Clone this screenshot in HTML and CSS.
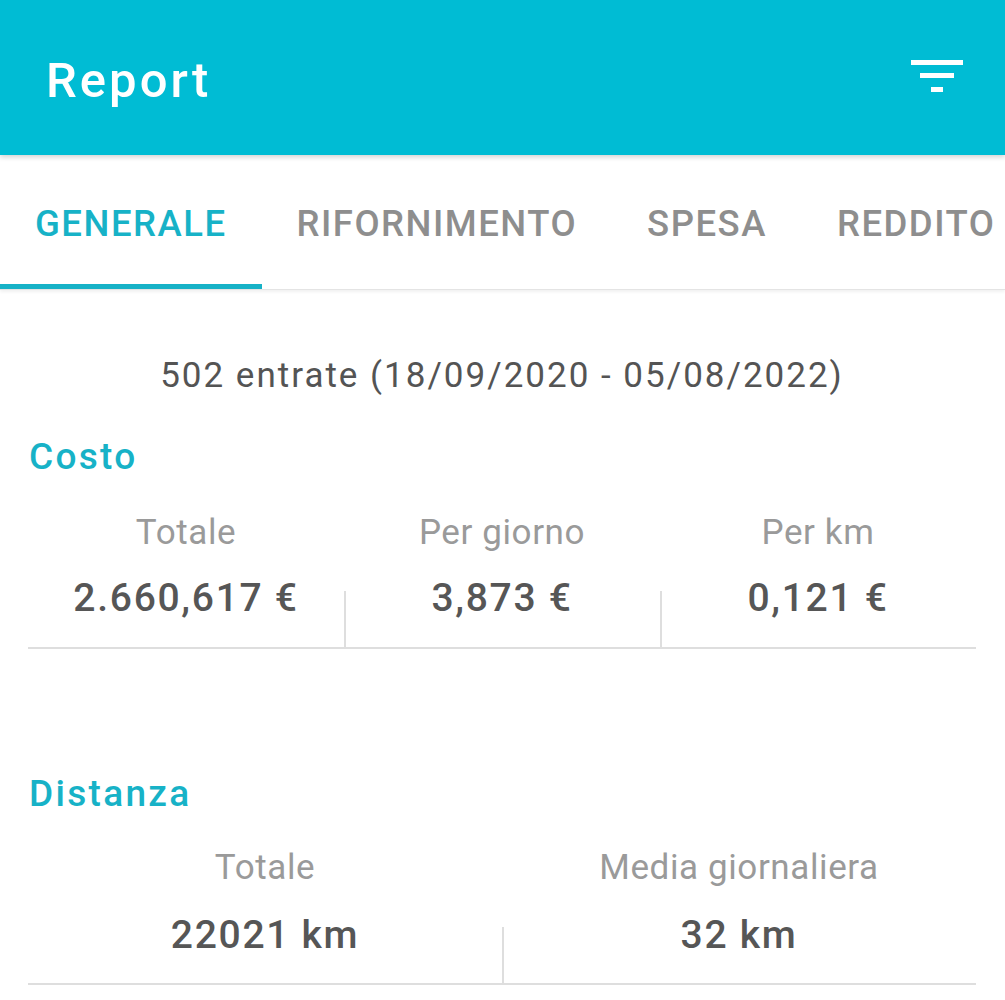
FILE: index.html
```html
<!DOCTYPE html>
<html lang="it">
<head>
	<meta charset="UTF-8">
	<title>Report</title>
	<link rel="stylesheet" href="styles.css">
</head>
<body>

	<!-- barra superiore -->
	<header class="appbar">
		<h1 class="appbar-title">Report</h1>
		<button class="filter-btn" type="button" aria-label="Filtra">
			<svg width="52" height="34" viewBox="0 0 52 34">
				<rect x="0" y="0" width="52" height="5" fill="#fff"/>
				<rect x="9" y="13" width="34" height="5" fill="#fff"/>
				<rect x="20" y="27" width="12" height="5" fill="#fff"/>
			</svg>
		</button>
	</header>

	<!-- schede -->
	<nav class="tabs">
		<a class="tab active">GENERALE</a>
		<a class="tab">RIFORNIMENTO</a>
		<a class="tab">SPESA</a>
		<a class="tab">REDDITO</a>
	</nav>

	<main class="content">
		<p class="summary">502 entrate (18/09/2020 - 05/08/2022)</p>

		<section class="block">
			<h2 class="block-title">Costo</h2>
			<div class="stats cols-3">
				<div class="stat">
					<div class="stat-label">Totale</div>
					<div class="stat-value">2.660,617 €</div>
				</div>
				<div class="stat">
					<div class="stat-label">Per giorno</div>
					<div class="stat-value">3,873 €</div>
				</div>
				<div class="stat">
					<div class="stat-label">Per km</div>
					<div class="stat-value">0,121 €</div>
				</div>
			</div>
		</section>

		<section class="block distance">
			<h2 class="block-title">Distanza</h2>
			<div class="stats cols-2">
				<div class="stat">
					<div class="stat-label">Totale</div>
					<div class="stat-value">22021 km</div>
				</div>
				<div class="stat">
					<div class="stat-label">Media giornaliera</div>
					<div class="stat-value">32 km</div>
				</div>
			</div>
		</section>
	</main>

</body>
</html>
```

FILE: styles.css
```css
*{box-sizing: border-box;}
body{
	margin: 0;
	background-color: #fff;
	font-family: Roboto, "Liberation Sans", sans-serif;
	overflow: hidden;
}

.appbar{
	position: relative;
	z-index: 2;
	height: 155px;
	display: flex;
	align-items: center;
	justify-content: space-between;
	padding: 0 42px 0 46px;
	background-color: #00BCD4;
	box-shadow: 0 2px 5px rgba(0,0,0,0.18);
}
.appbar-title{
	margin: 0;
	color: #fff;
	font-size: 49px;
	font-weight: 500;
	letter-spacing: 3px;
	line-height: 1;
	padding-top: 5px;
}
.filter-btn{
	border: none;
	background: none;
	padding: 0;
	display: flex;
	margin-top: -1px;
}

.tabs{
	display: flex;
	height: 135px;
	white-space: nowrap;
	border-bottom: 1px solid #e4e4e4;
	box-shadow: 0 2px 3px rgba(0,0,0,0.06);
}
.tab{
	display: flex;
	align-items: center;
	padding: 8px 35px 0 35px;
	border-bottom: 5px solid transparent;
	color: #8e8e8e;
	font-size: 36.5px;
	font-weight: 500;
	letter-spacing: 1.5px;
	flex-shrink: 0;
}
.tab.active{
	color: #17b2c7;
	border-bottom-color: #17b2c7;
}

.content{padding: 0 29px 0 28px;}

.summary{
	margin: 65px 0 0 0;
	text-align: center;
	color: #545454;
	font-size: 35px;
	letter-spacing: 2px;
	line-height: 42px;
}

.block-title{
	margin: 38px 0 0 1px;
	color: #17b2c7;
	font-size: 37px;
	font-weight: 500;
	letter-spacing: 2.3px;
	line-height: 44px;
}
.distance .block-title{margin-top: 123px;}

.stats{
	display: grid;
	border-bottom: 2px solid #dedede;
	margin-top: 33px;
}
.distance .stats{margin-top: 31px;}
.cols-3{grid-template-columns: repeat(3, 1fr);}
.cols-2{grid-template-columns: repeat(2, 1fr);}

.stat{text-align: center;}
.stat-label{
	color: #9a9a9a;
	font-size: 35px;
	letter-spacing: 0.6px;
	line-height: 42px;
}
.stat-value{
	margin-top: 21px;
	padding-bottom: 26px;
	color: #565656;
	font-size: 39px;
	font-weight: 500;
	letter-spacing: 1.7px;
	line-height: 46px;
}
.distance .stat-value{margin-top: 23px; padding-bottom: 25px;}
.stat + .stat .stat-value{
	background: linear-gradient(#dedede, #dedede) left bottom / 2px 56px no-repeat;
}
```
